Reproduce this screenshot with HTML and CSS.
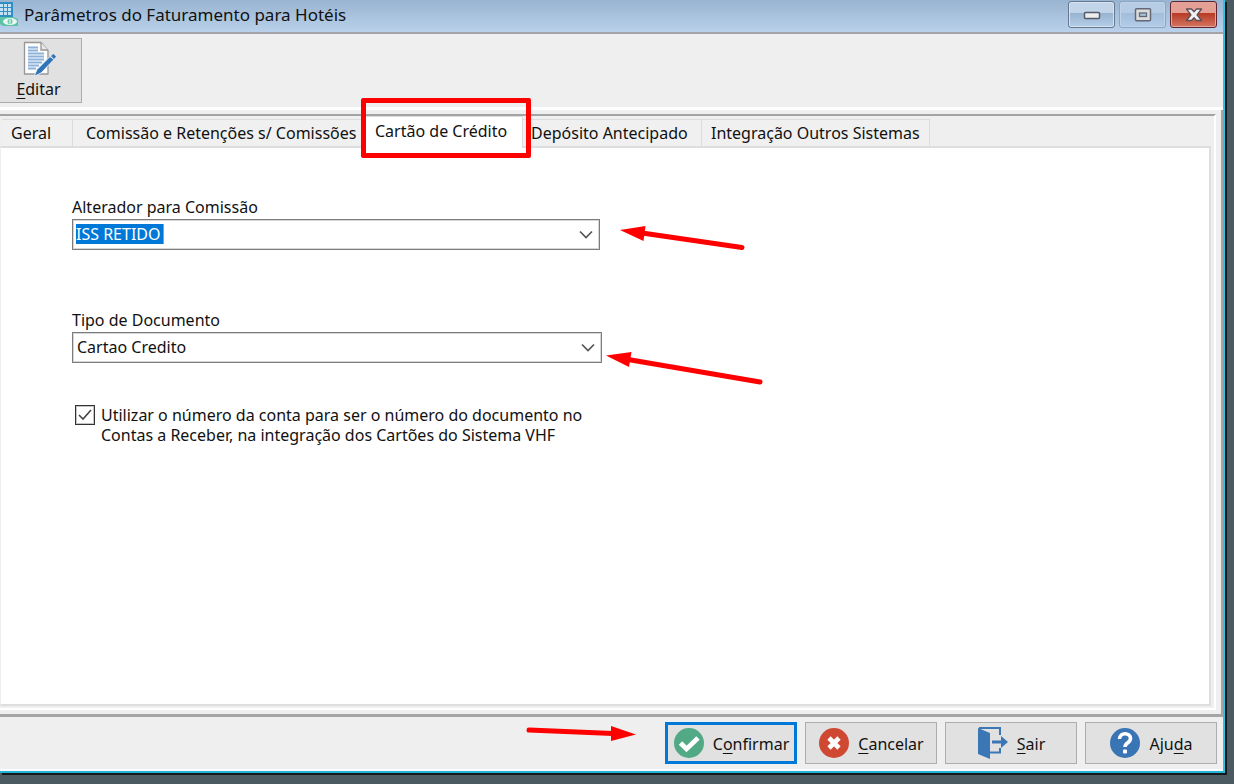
FILE: index.html
```html
<!DOCTYPE html>
<html lang="pt-BR">
<head>
<meta charset="utf-8">
<title>Parâmetros do Faturamento para Hotéis</title>
<link rel="stylesheet" href="styles.css">
</head>
<body>
<div class="window">
  <header class="titlebar">
    <svg class="app-icon" width="18" height="26" viewBox="0 0 18 26" aria-hidden="true">
      <rect x="0" y="2" width="13" height="21" fill="#2d8fc4"/>
      <path d="M0 4h3v3H0zM4 4h3v3H4zM8 4h3v3H8zM0 8h3v3H0zM4 8h3v3H4zM8 8h3v3H8zM0 12h3v3H0zM4 12h3v3H4zM8 12h3v3H8z" fill="#c3e2f4"/>
      <path d="M0 17h13l5 2v7H3l-3-2z" fill="#5cc4a4"/>
      <ellipse cx="10" cy="21.500" rx="7" ry="3.500" fill="#e9f8f2"/>
      <ellipse cx="10" cy="21.500" rx="2.500" ry="2.800" fill="#6cc9ac"/>
      <path d="M10 19.500v4" stroke="#fff"/>
    </svg>
    <h1 class="title">Parâmetros do Faturamento para Hotéis</h1>
    <div class="window-controls">
      <button class="control" type="button" aria-label="Minimizar">
        <svg width="18" height="16" viewBox="0 0 18 16"><rect x="1.500" y="5.500" width="15" height="6" rx="1" fill="#eee" stroke="#555b68" stroke-width="1.500"/></svg>
      </button>
      <button class="control control-dim" type="button" aria-label="Maximizar">
        <svg width="18" height="16" viewBox="0 0 18 16"><rect x="1.500" y="1.800" width="15" height="12" rx="1" fill="#dcdcdc" stroke="#636874" stroke-width="1.500"/><rect x="5.500" y="6" width="7" height="3.500" fill="#a9c3de" stroke="#636874" stroke-width="1.300"/></svg>
      </button>
      <button class="control control-close" type="button" aria-label="Fechar">
        <svg width="18" height="16" viewBox="0 0 18 16"><path d="M1.500 2h5L9 4.800 11.500 2h5L12 7.800l4.500 5.700h-5L9 10.800l-2.500 2.700h-5L6 7.800z" fill="#f1f1f1" stroke="#5d4f58" stroke-width="1.300" stroke-linejoin="round"/></svg>
      </button>
    </div>
  </header>

  <div class="toolbar">
    <button class="edit" type="button">
      <svg width="34" height="38" viewBox="0 0 34 38" aria-hidden="true">
        <path d="M2.500 1.500h16.500l7 8v23.500H2.500z" fill="#fdfdfd" stroke="#969696" stroke-width="1.300" stroke-linejoin="round"/>
        <path d="M19 1.500v7.500h7" fill="#e8e8e8" stroke="#969696" stroke-width="1.300"/>
        <path d="M6 6.500h10M6 9.500h10M6 12.500h16M6 15.500h16M6 18.500h16M6 21.500h14M6 24.500h11M6 27.500h8" stroke="#8db1d8" stroke-width="2"/>
        <path d="M12 35.500l3-7L28 15.500l4 3-13 13.500z" fill="#2f73b8" stroke="#e8eff6"/>
        <path d="M29 15l2.500-2 2.500 2.500-2 2.500z" fill="#2f73b8"/>
      </svg>
      <span><u>E</u>ditar</span>
    </button>
  </div>

  <main class="workspace">
    <div class="pages">
      <div class="tabs" role="tablist">
        <button class="tab" type="button" role="tab">Geral</button>
        <button class="tab tab-wide" type="button" role="tab">Comissão e Retenções s/ Comissões</button>
        <button class="tab tab-active" type="button" role="tab" aria-selected="true">Cartão de Crédito<span class="highlight"></span></button>
        <button class="tab tab-tight" type="button" role="tab">Depósito Antecipado</button>
        <button class="tab" type="button" role="tab">Integração Outros Sistemas</button>
      </div>
      <section class="panel" role="tabpanel">
        <div class="field">
          <label for="alterador">Alterador para Comissão</label>
          <div class="combo combo-edit">
            <input id="alterador" class="selected-text" type="text" value="ISS RETIDO">
            <button class="drop" type="button" aria-label="Abrir lista"><svg width="14" height="10" viewBox="0 0 14 10"><path d="M1 1.500l6 6 6-6" fill="none" stroke="#555" stroke-width="1.700"/></svg></button>
          </div>
          <svg class="arrow arrow-first" width="126" height="24" viewBox="0 0 126 24" aria-hidden="true"><path d="M22 7L122 21.500" stroke="#f00" stroke-width="5" stroke-linecap="round"/><path d="M0 4L25.500 0l-2 15z" fill="#f00"/></svg>
        </div>
        <div class="field">
          <label for="tipo">Tipo de Documento</label>
          <div class="combo combo-list">
            <select id="tipo"><option>Cartao Credito</option></select>
            <svg class="chevron" width="14" height="10" viewBox="0 0 14 10" aria-hidden="true"><path d="M1 1.500l6 6 6-6" fill="none" stroke="#555" stroke-width="1.700"/></svg>
          </div>
          <svg class="arrow arrow-second" width="158" height="33" viewBox="0 0 158 33" aria-hidden="true"><path d="M22 7.500L154 30" stroke="#f00" stroke-width="5" stroke-linecap="round"/><path d="M0 3.500L25.500 0l-2.500 15z" fill="#f00"/></svg>
        </div>
        <div class="check">
          <span class="box">
            <input id="numero" type="checkbox" checked>
            <svg width="20" height="20" viewBox="0 0 20 20" aria-hidden="true"><path d="M4 10l4 4 8-9" fill="none" stroke="#444" stroke-width="1.600"/></svg>
          </span>
          <label for="numero">Utilizar o número da conta para ser o número do documento no<br>Contas a Receber, na integração dos Cartões do Sistema VHF</label>
        </div>
      </section>
    </div>
  </main>

  <footer class="actions">
    <div class="primary">
      <svg class="arrow arrow-confirm" width="110" height="16" viewBox="0 0 110 16" aria-hidden="true"><path d="M3 4L87 7.500" stroke="#f00" stroke-width="5" stroke-linecap="round"/><path d="M110 8.500L85 0v15z" fill="#f00"/></svg>
      <button class="action action-default" type="button">
        <svg width="32" height="32" viewBox="0 0 32 32" aria-hidden="true"><circle cx="16" cy="16" r="15" fill="#51a985"/><path d="M7.500 16l6 6L25 11" fill="none" stroke="#fff" stroke-width="4.800"/></svg>
        <span>C<u>o</u>nfirmar</span>
      </button>
    </div>
    <button class="action" type="button">
      <svg width="32" height="32" viewBox="0 0 32 32" aria-hidden="true"><circle cx="16" cy="16" r="15" fill="#cf4832"/><path d="M11 11l10 10M21 11l-10 10" fill="none" stroke="#fff" stroke-width="4.600"/></svg>
      <span><u>C</u>ancelar</span>
    </button>
    <button class="action" type="button">
      <svg width="32" height="34" viewBox="0 0 32 34" aria-hidden="true"><path d="M1 2l12 5v26L1 28z" fill="#3b76b5"/><path d="M2 2h21v7M23 22v4.500H13" fill="none" stroke="#3b76b5" stroke-width="2"/><path d="M15 14.500h9V10l7 6-7 6v-4.500h-9z" fill="#3b76b5"/></svg>
      <span><u>S</u>air</span>
    </button>
    <button class="action" type="button">
      <svg width="32" height="32" viewBox="0 0 32 32" aria-hidden="true"><circle cx="16" cy="16" r="15" fill="#3974b4"/><path d="M10.500 12c0-7 11-7 11-.500 0 4.500-5.500 4-5.500 8.500" fill="none" stroke="#fff" stroke-width="3.600"/><rect x="14" y="22.500" width="4" height="4" rx="1" fill="#fff"/></svg>
      <span>Aju<u>d</u>a</span>
    </button>
  </footer>
</div>
</body>
</html>
```
FILE: styles.css
```css
* { box-sizing: border-box; }

body {
  margin: 0;
  height: 100vh;
  padding: 0 9px 11px 0;
  background: #4a5a60;
  color: #111;
  font: 16px/20px "Noto Sans", sans-serif;
  overflow: hidden;
}

button, input, select { font: inherit; color: inherit; margin: 0; }
svg { display: block; flex: none; }
u { text-underline-offset: 3px; text-decoration-thickness: 1px; }

.window {
  display: flex;
  flex-direction: column;
  height: 100%;
  background: #efefef;
  border-right: 2px solid #35bfe0;
  border-bottom: 2px solid #22b4d4;
  box-shadow: 2px 2px 0 #15191c;
}

.titlebar {
  display: flex;
  align-items: flex-start;
  height: 34px;
  padding-right: 6px;
  background: linear-gradient(#99b4d1, #b9d1ea);
  border-bottom: 2px solid #a2a4a8;
}
.title {
  flex: 1;
  margin: 0;
  padding: 5px 0 0 6px;
  font-size: 17px;
  font-weight: 400;
}
.window-controls { display: flex; gap: 4px; padding-top: 1px; }
.control {
  display: grid;
  place-items: center;
  width: 47px;
  height: 27px;
  padding: 0;
  border: 1px solid #65788f;
  border-radius: 3px;
  box-shadow: inset 0 0 0 1px #d5e3f2;
  background: linear-gradient(#c2d4e8 45%, #98b3d0 45%, #b5cee8);
}
.control-dim {
  border-color: #8da5c0;
  box-shadow: inset 0 0 0 1px #bfd3e9;
  background: linear-gradient(#b6cce4 45%, #a2bddb 45%, #b2cce8);
}
.control-close {
  border-color: #5c2530;
  box-shadow: inset 0 0 0 1px #e5a59b;
  background: linear-gradient(#e5a095 45%, #b73b24 45%, #d47461);
}

.toolbar {
  display: flex;
  padding: 4px 0;
  border-bottom: 3px solid #fff;
}
.edit {
  display: flex;
  flex-direction: column;
  align-items: center;
  width: 82px;
  height: 65px;
  padding: 2px 4px 0 0;
  border: 1px solid #acacac;
  border-left: 0;
  background: #e1e1e1;
}

.workspace {
  display: flex;
  flex: 1;
  min-height: 0;
  padding: 4px 5px 4px 0;
  border-right: 2px solid #a5a5a5;
  border-bottom: 3px solid #a5a5a5;
}
.pages {
  display: flex;
  flex: 1;
  flex-direction: column;
  padding-right: 3px;
  padding-bottom: 2px;
  border-top: 2px solid #a3a3a3;
  border-right: 2px solid #fff;
  border-bottom: 2px solid #fff;
}
.tabs {
  display: grid;
  grid-template-columns: 71px 293px 157px 179px 228px;
  align-items: end;
  height: 30px;
  padding-left: 2px;
}
.tab {
  height: 27px;
  padding: 0 9px;
  border: 1px solid #dcdcdc;
  border-width: 1px 1px 0 0;
  background: #f0f0f0;
  text-align: left;
  white-space: nowrap;
}
.tab-wide { padding: 0 0 0 13px; }
.tab-tight { padding: 0 0 0 8px; }
.tab-active {
  position: relative;
  z-index: 1;
  height: 32px;
  margin-bottom: -2px;
  padding-bottom: 3px;
  background: #fff;
}
.highlight {
  position: absolute;
  inset: -19px -9px -10px -5px;
  border: 5px solid #f00;
  border-radius: 2px;
}
.panel {
  flex: 1;
  padding: 49px 71px;
  border: 2px solid #dedede;
  border-left: 1px solid #eee;
  background: #fff;
}

.field {
  position: relative;
  width: 530px;
  height: 113px;
}
.field label { display: block; height: 22px; }
.combo {
  height: 31px;
  border: 1px solid #7c7c7c;
  box-shadow: inset 0 0 0 1px #d6d6d6;
  background: #fff;
}
.combo-edit {
  display: flex;
  align-items: flex-start;
  justify-content: space-between;
  width: 528px;
  padding: 4px 3px;
}
.selected-text {
  width: 88px;
  height: 20px;
  padding: 0;
  border: 0;
  border-right: 1px solid #f28a2e;
  background: #0078d7;
  color: #fff;
}
.drop {
  height: 22px;
  padding: 2px 3px;
  border: 0;
  background: none;
}
.combo-list { display: grid; }
.combo-list select {
  grid-area: 1 / 1;
  padding: 0 0 1px 4px;
  border: 0;
  background: none;
  appearance: none;
}
.chevron {
  grid-area: 1 / 1;
  place-self: center end;
  margin-right: 6px;
  pointer-events: none;
}
.check {
  display: flex;
  align-items: flex-start;
  gap: 6px;
  padding-left: 3px;
  margin-top: -18px;
}
.box { display: grid; }
.box > * { grid-area: 1 / 1; }
.box svg { pointer-events: none; visibility: hidden; }
.box input:checked + svg { visibility: visible; }
.box input {
  width: 20px;
  height: 20px;
  border: 1px solid #333;
  box-shadow: inset 0 0 0 1px #c4c4c4;
  background: #fff;
  appearance: none;
}
.check label { white-space: nowrap; }

.arrow { position: absolute; pointer-events: none; }
.arrow-first { left: 548px; top: 29px; }
.arrow-second { left: 534px; top: 42px; }
.arrow-confirm { right: 100%; top: 4px; margin-right: 29px; }

.actions {
  display: flex;
  justify-content: flex-end;
  gap: 8px;
  padding: 5px 6px 5px;
  border-bottom: 2px solid #f8faff;
}
.primary { position: relative; }
.action {
  display: flex;
  align-items: center;
  justify-content: center;
  gap: 8px;
  width: 132px;
  height: 42px;
  padding: 0;
  border: 1px solid #adadad;
  background: #e1e1e1;
}
.action-default { border: 3px solid #0078d7; }
.action span { padding-top: 2px; }
```
